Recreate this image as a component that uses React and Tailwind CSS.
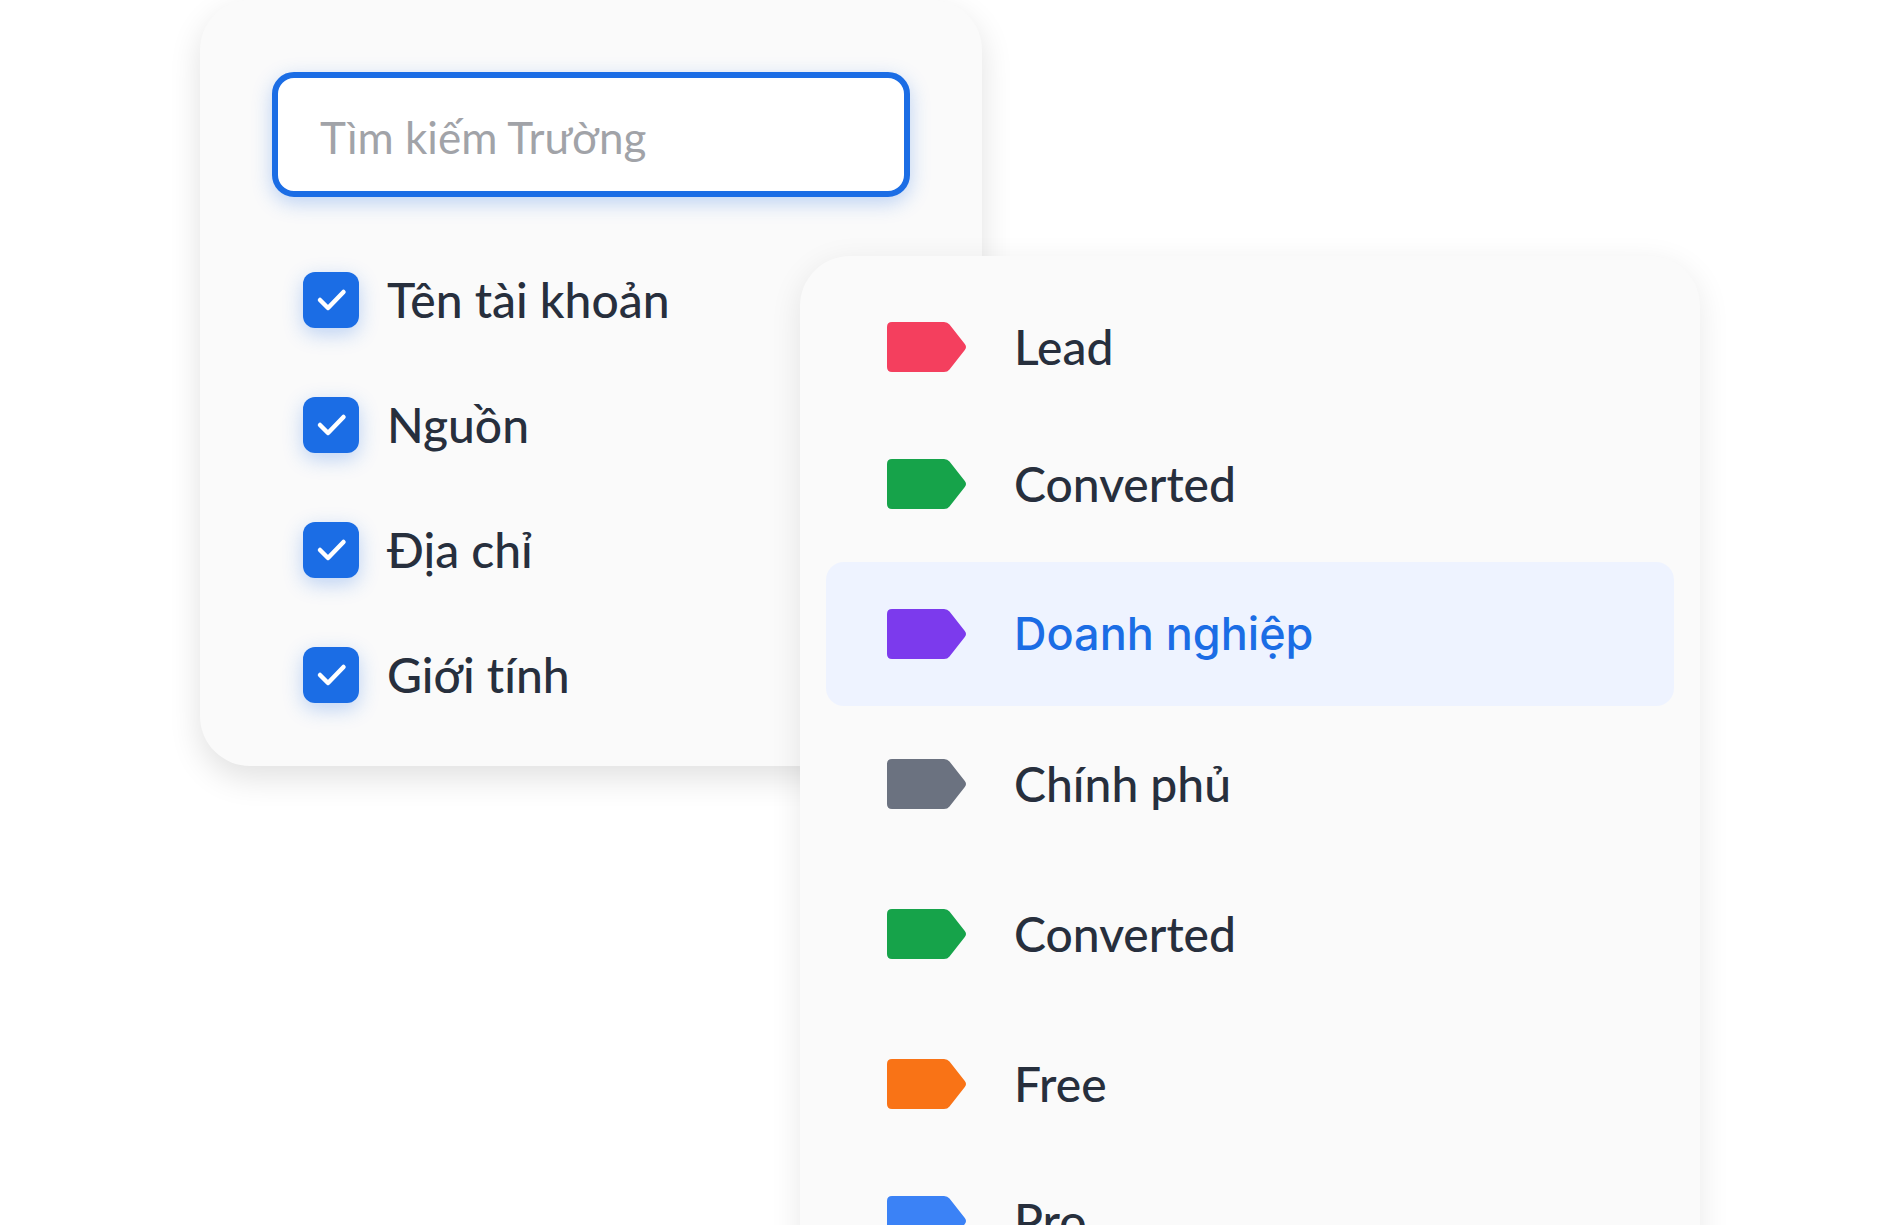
const fields = [
  { id: "account-name", label: "Tên tài khoản" },
  { id: "source", label: "Nguồn" },
  { id: "address", label: "Địa chỉ" },
  { id: "gender", label: "Giới tính" },
];

const tags = [
  { id: 1, label: "Lead", color: "text-[#f43f5e]", height: "h-[118px]" },
  { id: 2, label: "Converted", color: "text-[#16a34a]", height: "h-36" },
  {
    id: 3,
    label: "Doanh nghiệp",
    color: "text-[#7c3aed]",
    height: "h-36",
    active: true,
  },
  { id: 4, label: "Chính phủ", color: "text-[#6b7280]", height: "h-36" },
  { id: 5, label: "Converted", color: "text-[#16a34a]", height: "h-36" },
  { id: 6, label: "Free", color: "text-[#f97316]", height: "h-36" },
  { id: 7, label: "Pro", color: "text-[#3b82f6]", height: "h-[118px]" },
];

const TagIcon = ({ className }) => (
  <svg
    viewBox="0 0 79 50"
    fill="currentColor"
    aria-hidden="true"
    className={`h-[50px] w-[79px] shrink-0 ${className}`}
  >
    <path d="M5 0H57Q60.500 0 62.500 2.500L77.800 22Q80.200 25 77.800 28L62.500 47.500Q60.500 50 57 50H5Q0 50 0 45V5Q0 0 5 0Z" />
  </svg>
);

const FieldCheckbox = ({ id, label }) => (
  <div className="flex h-14 items-center gap-7">
    <span className="grid size-14 shrink-0">
      <input
        id={id}
        type="checkbox"
        defaultChecked
        className="peer col-start-1 row-start-1 size-14 appearance-none rounded-xl bg-white shadow-[0_6px_20px_rgba(27,109,229,0.28)] checked:bg-[#1b6de5]"
      />
      <svg
        viewBox="0 0 56 56"
        fill="none"
        stroke="white"
        strokeWidth="4.5"
        strokeLinecap="round"
        strokeLinejoin="round"
        aria-hidden="true"
        className="pointer-events-none col-start-1 row-start-1 size-14 opacity-0 peer-checked:opacity-100"
      >
        <path d="M17 28L25 36L40.500 20" />
      </svg>
    </span>
    <label
      htmlFor={id}
      className="text-[48px] leading-14 font-medium text-[#272f3d]"
    >
      {label}
    </label>
  </div>
);

const App = () => {
  return (
    <main className="h-screen overflow-hidden border-b-3 border-white bg-white font-['Lato',sans-serif] [font-variant-ligatures:none]">
      <div className="mx-auto grid max-w-[1500px] grid-cols-[600fr_182fr_718fr] grid-rows-[256px_510px_auto]">
        {/* Field picker */}
        <section className="col-span-2 col-start-1 row-span-2 row-start-1 rounded-[50px] bg-[#fafafa] px-[72px] pt-[72px] shadow-[0_12px_32px_rgba(0,0,0,0.12)]">
          <input
            type="search"
            aria-label="Tìm kiếm Trường"
            placeholder="Tìm kiếm Trường"
            className="h-[125px] w-full rounded-[22px] border-6 border-[#1b6de5] bg-white px-[42px] pt-1 text-[44px] text-[#272f3d] shadow-[0_6px_20px_rgba(27,109,229,0.28)] outline-none placeholder:text-[#a1a3a8]"
          />
          <div className="mt-[75px] flex flex-col gap-[69px] pl-[31px]">
            {fields.map((field) => (
              <FieldCheckbox key={field.id} {...field} />
            ))}
          </div>
        </section>

        {/* Tag menu */}
        <section className="z-10 col-span-2 col-start-2 row-span-2 row-start-2 rounded-[50px] bg-[#fafafa] px-[26px] py-8 shadow-[0_8px_32px_rgba(0,0,0,0.09)]">
          <ul className="flex flex-col gap-1.5">
            {tags.map((tag) => (
              <li key={tag.id}>
                <button
                  type="button"
                  className={`flex w-full items-center gap-12 rounded-[18px] px-[61px] text-left font-medium ${tag.height} ${
                    tag.active
                      ? "bg-[#eef3ff] font-['Inter',sans-serif] text-[45px] text-[#1b6de5]"
                      : "text-[48px] text-[#272f3d]"
                  }`}
                >
                  <TagIcon className={tag.color} />
                  {tag.label}
                </button>
              </li>
            ))}
          </ul>
        </section>
      </div>
    </main>
  );
};

export default App;
